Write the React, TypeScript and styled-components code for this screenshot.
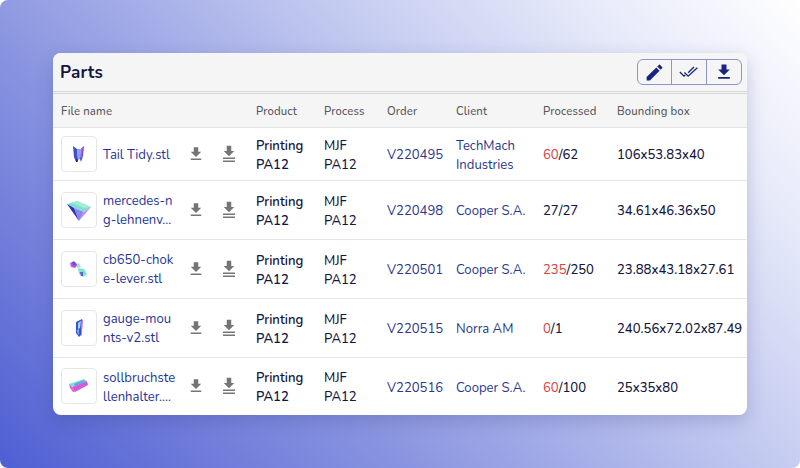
import React from "react";
import styled, { createGlobalStyle } from "styled-components";

const Global = createGlobalStyle`
  html, body { margin: 0; padding: 0; background: #fff; }
  body { font-family: "Nunito", "Lato", "Noto Sans", sans-serif; }
  * { box-sizing: border-box; }
`;

const Page = styled.div`
  width: 800px;
  height: 468px;
  border-radius: 8px;
  overflow: hidden;
  padding: 53px 53px 0;
  background: linear-gradient(46deg, #4f5fd3 0%, #8a95e0 33%, #c3caf0 62%, #e6e9f9 82%, #ffffff 100%);
`;

const Card = styled.section`
  width: 694px;
  height: 362px;
  background: #fff;
  border-radius: 8px;
  overflow: hidden;
  box-shadow: 0 6px 18px rgba(40, 50, 120, 0.22);
`;

const Header = styled.header`
  height: 41px;
  background: #f5f5f5;
  border-bottom: 3px double #d6d6d6;
  display: flex;
  align-items: center;
  justify-content: space-between;
  padding: 0 0 0 7px;
`;

const Title = styled.h1`
  margin: 0;
  font-size: 17px;
  font-weight: 700;
  color: #14163f;
  letter-spacing: 0.2px;
`;

const ButtonGroup = styled.div`
  display: flex;
  margin-right: 5px;
  height: 26px;
  border: 1px solid #8c94c8;
  border-radius: 6px;
`;

const ToolButton = styled.button`
  width: 33px;
  padding: 0;
  border: 0;
  background: transparent;
  display: flex;
  align-items: center;
  justify-content: center;
  color: #1a237e;
  & + & { border-left: 1px solid #8c94c8; width: 35px; }
`;

const Table = styled.table`
  width: 694px;
  table-layout: fixed;
  border-collapse: collapse;
  font-size: 13.1px;
  color: #14163f;
`;

const HeadRow = styled.tr`
  height: 33px;
  background: #f5f5f5;
  border-bottom: 1px solid #e4e4e4;
`;

const Th = styled.th`
  padding: 2px 0 0 ${(p) => p.$pad ?? 0}px;
  text-align: left;
  font-size: 11.3px;
  font-weight: 500;
  color: #55565f;
  letter-spacing: 0.15px;
`;

const Row = styled.tr`
  height: ${(p) => p.$h}px;
  border-bottom: 1px solid #e6e6e6;
  &:last-child { border-bottom: 0; }
`;

const Td = styled.td`
  padding: 4px 0 0;
  line-height: 19px;
  white-space: nowrap;
`;

const FileCellTd = styled.td`
  padding: 0;
  line-height: 19px;
`;

const FileCell = styled.div`
  display: flex;
  align-items: center;
  padding-left: 8px;
`;

const Thumb = styled.div`
  width: 36px;
  height: 36px;
  flex: none;
  border: 1px solid #e6e6e6;
  border-radius: 4px;
  background: #fff;
  display: flex;
  align-items: center;
  justify-content: center;
`;

const FileName = styled.span`
  width: 74px;
  margin: 3px 2px 0 6px;
  flex: none;
  color: #24359a;
  white-space: normal;
  word-break: break-all;
`;

const RowIcons = styled.div`
  display: flex;
  gap: 15px;
  margin: 0 0 0 8px;
  color: #757575;
`;

const IconSlot = styled.span`
  width: 18px;
  height: 18px;
  display: block;
`;

const Link = styled.span`
  color: #2a368e;
  display: block;
  white-space: pre-line;
`;

const Lines = styled.span`
  display: block;
  white-space: pre-line;
  font-weight: ${(p) => p.$weight ?? 500};
`;

const Red = styled.span`
  color: #e23b3b;
`;

const Plain = styled.span`
  font-weight: 500;
`;

const DownloadIcon = ({ size = 18 }) => (
  <svg width={size} height={size} viewBox="0 0 24 24" fill="currentColor">
    <path d="M19 9h-4V3H9v6H5l7 7 7-7zM5 18v2h14v-2H5z" />
  </svg>
);

const DownloadDouble = () => (
  <svg width="18" height="18" viewBox="0 0 24 24" fill="currentColor">
    <path d="M19 8h-4V1H9v7H5l7 7 7-7zM4 16.5v2h16v-2H4zM4 20.5v2h16v-2H4z" />
  </svg>
);

const Thumbs: Record<string, React.ReactNode> = {
  tail: (
    <svg width="34" height="34" viewBox="0 0 34 34">
      <polygon points="11,9 15,12 16,23 14,25 12,20" fill="#3f51c8" />
      <polygon points="22,9 19,12 18,22 19,25 21,19" fill="#4a4fd0" />
      <polygon points="15,12 19,12 18,22 16,23" fill="#8aa0ea" />
      <polygon points="19,12 21,10 20,20 18.5,21" fill="#c04fe0" />
      <polygon points="14,22 16,23 15.5,25 14,25" fill="#20208a" />
    </svg>
  ),
  merc: (
    <svg width="34" height="34" viewBox="0 0 34 34">
      <polygon points="5,11 15,8 29,14 22,19 12,15" fill="#7fe0cf" />
      <polygon points="15,8 29,14 22,15 10,10" fill="#a4ecd8" />
      <polygon points="29,14 22,19 17,28" fill="#c78ae8" />
      <polygon points="12,15 22,19 17,28" fill="#8a86ec" />
      <polygon points="5,11 12,15 17,28" fill="#2b2fc0" />
    </svg>
  ),
  choke: (
    <svg width="34" height="34" viewBox="0 0 34 34">
      <polygon points="8,11 12,9 16,13 13,16 9,15" fill="#c75bd6" />
      <polygon points="10,10 13,10 14,13 11,14" fill="#4e5bd8" />
      <polygon points="15,12 17,11 19,15 15,16" fill="#8ee8d2" />
      <polygon points="16,16 22,17 25,22 21,25 17,22" fill="#7ee3d0" />
      <polygon points="18,20 21,20 21,24 19,24" fill="#5763da" />
    </svg>
  ),
  gauge: (
    <svg width="34" height="34" viewBox="0 0 34 34">
      <polygon points="14,11 20,8 19,24 17,26 14,22" fill="#3f4fd0" />
      <polygon points="16,12 19,10 18,17 16,18" fill="#8be0e0" />
      <polygon points="19.5,8 21,9 19.8,24 19,25" fill="#cc5fe0" />
      <polygon points="15,19 17,18 17,23 16,24" fill="#7fb2f0" />
    </svg>
  ),
  soll: (
    <svg width="34" height="34" viewBox="0 0 34 34">
      <polygon points="7,15 22,10 25,12 10,18" fill="#7ee0d0" />
      <polygon points="10,18 25,12 26,16 13,23" fill="#d35cd6" />
      <polygon points="7,15 10,18 13,23 11,23 8,19" fill="#e060d8" />
      <polygon points="12,15 22,11 23,13 13,17" fill="#62a6e8" />
    </svg>
  ),
};

type Part = {
  thumb: string;
  name: string;
  order: string;
  client: string;
  done?: string;
  rest: string;
  box: string;
  h: number;
};

const parts: Part[] = [
  { thumb: "tail", name: "Tail Tidy.stl", order: "V220495", client: "TechMach\nIndustries", done: "60", rest: "/62", box: "106x53.83x40", h: 53 },
  { thumb: "merc", name: "mercedes-ng-lehnenv...", order: "V220498", client: "Cooper S.A.", rest: "27/27", box: "34.61x46.36x50", h: 59 },
  { thumb: "choke", name: "cb650-choke-lever.stl", order: "V220501", client: "Cooper S.A.", done: "235", rest: "/250", box: "23.88x43.18x27.61", h: 59 },
  { thumb: "gauge", name: "gauge-mounts-v2.stl", order: "V220515", client: "Norra AM", done: "0", rest: "/1", box: "240.56x72.02x87.49", h: 59 },
  { thumb: "soll", name: "sollbruchstellenhalter....", order: "V220516", client: "Cooper S.A.", done: "60", rest: "/100", box: "25x35x80", h: 58 },
];

export default function App() {
  return (
    <Page>
      <Global />
      <Card>
        <Header>
          <Title>Parts</Title>
          <ButtonGroup>
            <ToolButton aria-label="Edit">
              <svg width="21" height="21" viewBox="0 0 24 24" fill="currentColor">
                <path d="M3 17.25V21h3.75L17.81 9.94l-3.75-3.75L3 17.25zM20.71 7.04c.39-.39.39-1.02 0-1.41l-2.34-2.34c-.39-.39-1.02-.39-1.41 0l-1.83 1.83 3.75 3.75 1.83-1.83z" />
              </svg>
            </ToolButton>
            <ToolButton aria-label="Mark all">
              <svg width="20" height="20" viewBox="0 0 24 24" fill="none" stroke="currentColor" strokeWidth="1.6">
                <path d="M1 12l5 5 1.5-1.5M6.5 12.5l4.5 4.5L22 7M11 13l7-7" />
              </svg>
            </ToolButton>
            <ToolButton aria-label="Download">
              <DownloadIcon size={20} />
            </ToolButton>
          </ButtonGroup>
        </Header>
        <Table>
          <colgroup>
            <col style={{ width: 203 }} />
            <col style={{ width: 68 }} />
            <col style={{ width: 63 }} />
            <col style={{ width: 69 }} />
            <col style={{ width: 87 }} />
            <col style={{ width: 74 }} />
            <col />
          </colgroup>
          <thead>
            <HeadRow>
              <Th $pad={8}>File name</Th>
              <Th>Product</Th>
              <Th>Process</Th>
              <Th>Order</Th>
              <Th>Client</Th>
              <Th>Processed</Th>
              <Th>Bounding box</Th>
            </HeadRow>
          </thead>
          <tbody>
            {parts.map((p) => (
              <Row key={p.order} $h={p.h}>
                <FileCellTd>
                  <FileCell>
                    <Thumb>{Thumbs[p.thumb]}</Thumb>
                    <FileName>{p.name}</FileName>
                    <RowIcons>
                      <IconSlot><DownloadIcon /></IconSlot>
                      <IconSlot><DownloadDouble /></IconSlot>
                    </RowIcons>
                  </FileCell>
                </FileCellTd>
                <Td><Lines $weight={600}>{"Printing\nPA12"}</Lines></Td>
                <Td><Lines>{"MJF\nPA12"}</Lines></Td>
                <Td><Link>{p.order}</Link></Td>
                <Td><Link>{p.client}</Link></Td>
                <Td>
                  {p.done && <Red>{p.done}</Red>}
                  <Plain>{p.rest}</Plain>
                </Td>
                <Td><Plain>{p.box}</Plain></Td>
              </Row>
            ))}
          </tbody>
        </Table>
      </Card>
    </Page>
  );
}
